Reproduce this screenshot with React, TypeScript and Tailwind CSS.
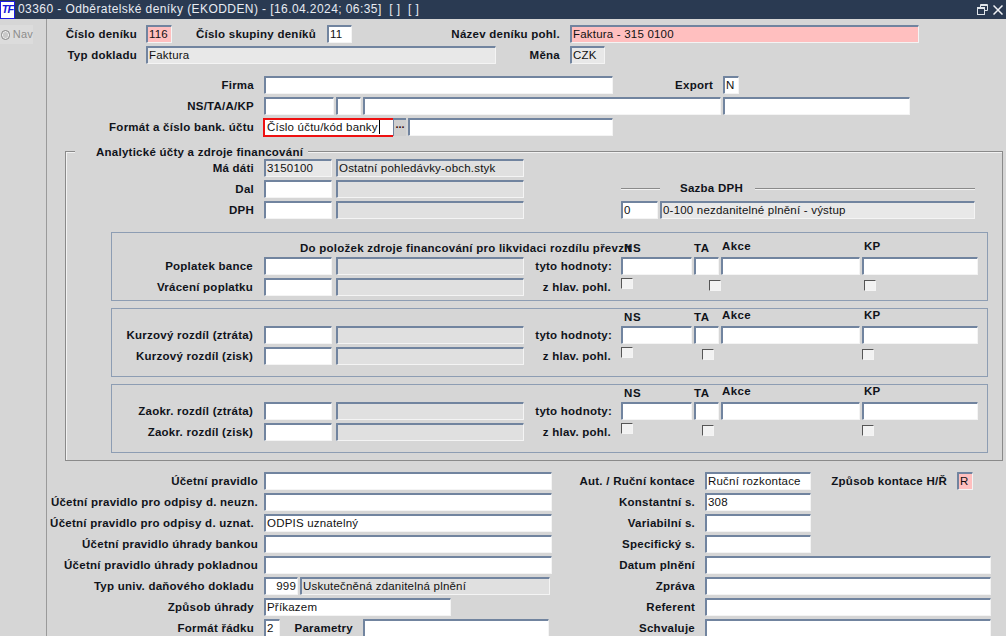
import React from 'react';

function cn(...inputs: any[]) {
  return inputs.filter(Boolean).join(' ');
}

// oracle forms style sunken text item
function Field({ className, value, right }: { className?: string; value?: string; right?: boolean }) {
  return (
    <div
      className={cn(
        'h-[18px] shrink-0 rounded-[1px] border-t-2 border-l-2 border-r border-b border-t-[#71849f] border-l-[#71849f] border-r-[#f4f4f4] border-b-[#f4f4f4] px-[1px] text-[11.5px] leading-[15px] tracking-[0.2px] text-[#111] whitespace-nowrap overflow-hidden',
        right && 'text-right',
        className || 'bg-white',
      )}
    >
      {value}
    </div>
  );
}

function Label({ className, children }: { className?: string; children: React.ReactNode }) {
  return (
    <div className={cn('shrink-0 text-right text-[11.5px] leading-[18px] font-bold tracking-[0.25px] text-[#10131a] whitespace-nowrap', className)}>
      {children}
    </div>
  );
}

function Row({ className, children }: { className?: string; children: React.ReactNode }) {
  return <div className={cn('flex h-[18px] mb-[3px]', className)}>{children}</div>;
}

function Check({ className }: { className?: string }) {
  return <div className={cn('h-[11px] w-[12px] shrink-0 border-t border-l border-t-[#555] border-l-[#555] border-r border-b border-r-[#f4f4f4] border-b-[#f4f4f4] bg-[#f2f2f2]', className)} />;
}

function DiffBox({
  first,
  second,
  title,
  pad,
  check2,
  check3,
  className,
}: {
  first: string;
  second: string;
  title?: string;
  pad?: string;
  check2: string;
  check3: string;
  className?: string;
}) {
  return (
    <div className={cn('ml-[45px] h-[69px] w-[877px] border border-[#8d9db3]', pad, className)}>
      <div className="flex h-[17px]">
        {title ? (
          <div className="ml-[188px] w-[321px] shrink-0 self-end mb-[2px] text-[11.5px] leading-[14px] font-bold tracking-[0.25px] text-[#10131a] whitespace-nowrap">{title}</div>
        ) : (
          <div className="w-[509px] shrink-0" />
        )}
        <div className="w-[73px] shrink-0 self-end mb-[2px] pl-[3px] text-[11.5px] leading-[14px] font-bold tracking-[0.6px] text-[#10131a]">NS</div>
        <div className="w-[27px] shrink-0 self-end mb-[2px] text-[11.5px] leading-[14px] font-bold tracking-[0.6px] text-[#10131a]">TA</div>
        <div className="w-[141px] shrink-0 self-start pl-[1px] text-[11.5px] leading-[12px] font-bold tracking-[0.4px] text-[#10131a]">Akce</div>
        <div className="self-start pl-[2px] text-[11.5px] leading-[12px] font-bold tracking-[0.2px] text-[#10131a]">KP</div>
      </div>
      <Row>
        <Label className="w-[141px] mr-[11px]">{first}</Label>
        <Field className="w-[68px] bg-white" />
        <Field className="ml-[4px] w-[188px] bg-[#e0e0e0]" />
        <Label className="w-[88px] mr-[9px]">tyto hodnoty:</Label>
        <Field className="w-[71px] bg-white" />
        <Field className="ml-[2px] w-[25px] bg-white" />
        <Field className="ml-[2px] w-[139px] bg-white" />
        <Field className="ml-[2px] w-[116px] bg-white" />
      </Row>
      <Row className="mb-0">
        <Label className="w-[141px] mr-[11px]">{second}</Label>
        <Field className="w-[68px] bg-white" />
        <Field className="ml-[4px] w-[188px] bg-[#e0e0e0]" />
        <Label className="w-[87px] mr-[10px]">z hlav. pohl.</Label>
        <Check />
        <Check className={cn('mt-[2px]', check2)} />
        <Check className={cn('mt-[2px]', check3)} />
      </Row>
    </div>
  );
}

export default function App() {
  return (
    <div className="h-[636px] w-[1006px] overflow-hidden bg-[#d6d6d6] font-['Liberation_Sans',Arial,sans-serif]">
      {/* title bar */}
      <div className="flex h-[19px] items-center bg-[#2a3a52]">
        <div className="flex h-[18px] w-[15px] shrink-0 items-center justify-center border border-[#1c1ce0] bg-white text-[11px] leading-none font-bold italic tracking-[-1px] text-[#1616d8]">
          TF
        </div>
        <div className="ml-[3px] text-[12px] leading-[19px] tracking-[0.42px] whitespace-pre text-[#e8ecf2]">
          03360 - Odběratelské deníky (EKODDEN) - [16.04.2024; 06:35]  [ ]  [ ]
        </div>
        <svg className="ml-auto" width="11" height="11" viewBox="0 0 11 11" fill="none" stroke="#dfe4ea" strokeWidth="1">
          <path d="M3.5 3V.5h7v6H7.5" />
          <path d="M3.5 1.5h7" />
          <rect x=".5" y="3.5" width="7" height="7" />
          <path d="M.5 4.5h7" />
        </svg>
        <svg className="ml-[5px] mr-[3px]" width="10" height="10" viewBox="0 0 10 10" fill="none" stroke="#f0f2f5" strokeWidth="1.5">
          <path d="M.5.5l9 9M9.5.5l-9 9" />
        </svg>
      </div>

      <div className="flex h-[617px]">
        {/* nav strip */}
        <div className="w-[47px] shrink-0 border-r border-r-[#9a9a9a]">
          <div className="mt-[6px] flex h-[19px] w-[33px] items-center bg-[#dcdcdc] pl-[1px]">
            <div className="h-[10px] w-[10px] rounded-full border border-[#8a8a8a] bg-[#c9c9c9] shadow-[inset_0_0_0_1px_#efefef]" />
            <span className="ml-[3px] text-[11px] tracking-[0.2px] text-[#8d8d8d]">Nav</span>
          </div>
        </div>

        <div className="min-w-0 flex-1 pt-[6px]">
          {/* header */}
          <Row>
            <Label className="w-[90px] mr-[9px]">Číslo deníku</Label>
            <Field className="w-[26px] bg-[#ffbfbf]" value="116" />
            <Label className="w-[144px] mr-[11px]">Číslo skupiny deníků</Label>
            <Field className="w-[25px] bg-white" value="11" />
            <Label className="w-[208px] mr-[10px]">Název deníku pohl.</Label>
            <Field className="w-[349px] bg-[#ffbfbf]" value="Faktura - 315 0100" />
          </Row>
          <Row className="mb-[12px]">
            <Label className="w-[90px] mr-[9px]">Typ dokladu</Label>
            <Field className="w-[350px] bg-[#e8e8e8]" value="Faktura" />
            <Label className="w-[64px] mr-[10px]">Měna</Label>
            <Field className="w-[35px] bg-[#e8e8e8]" value="CZK" />
          </Row>
          <Row>
            <Label className="w-[207px] mr-[10px]">Firma</Label>
            <Field className="w-[349px] bg-white" />
            <Label className="w-[100px] mr-[10px]">Export</Label>
            <Field className="w-[16px] bg-white" value="N" />
          </Row>
          <Row>
            <Label className="w-[207px] mr-[10px]">NS/TA/A/KP</Label>
            <Field className="w-[70px] bg-white" />
            <Field className="ml-[2px] w-[25px] bg-white" />
            <Field className="ml-[2px] w-[358px] bg-white" />
            <Field className="ml-[2px] w-[187px] bg-white" />
          </Row>
          <Row className="mb-[14px] h-[19px]">
            <Label className="w-[207px] mr-[9px]">Formát a číslo bank. účtu</Label>
            <div className="h-[19px] w-[130px] shrink-0 border-2 border-r-0 border-[#ee1111] bg-white px-[2px] text-[11.5px] leading-[15px] tracking-[0.2px] text-[#111] whitespace-nowrap">
              Číslo účtu/kód banky<span className="ml-[1px] inline-block h-[14px] w-[1px] bg-black align-[-3px]" />
            </div>
            <div className="flex h-[18px] w-[13px] shrink-0 justify-center border-t-2 border-l border-t-[#71849f] border-l-[#71849f] bg-[#cfcfcf] text-[11px] leading-[9px] font-bold text-[#3a0a0a]">
              ...
            </div>
            <Field className="ml-[2px] w-[205px] bg-white" />
          </Row>

          {/* Analytické účty */}
          <div className="relative ml-[18px] h-[310px] w-[938px] border border-[#8a8a8a] pt-[7px] shadow-[inset_1px_1px_0_#f2f2f2]">
            <div className="absolute -top-[7px] left-[9px] w-[233px] bg-[#d6d6d6] pl-[21px] text-[11.5px] leading-[14px] font-bold tracking-[0.25px] text-[#10131a] whitespace-nowrap">
              Analytické účty a zdroje financování
            </div>
            <Row>
              <Label className="w-[188px] mr-[10px]">Má dáti</Label>
              <Field className="w-[68px] bg-[#e8e8e8]" value="3150100" />
              <Field className="ml-[4px] w-[188px] bg-[#e0e0e0]" value="Ostatní pohledávky-obch.styk" />
            </Row>
            <Row>
              <Label className="w-[188px] mr-[10px]">Dal</Label>
              <Field className="w-[68px] bg-white" />
              <Field className="ml-[4px] w-[188px] bg-[#e0e0e0]" />
              <div className="ml-[97px] flex w-[354px] items-center">
                <div className="h-[2px] w-[39px] border-t border-t-[#8a8a8a] bg-[#f2f2f2]" />
                <span className="ml-[20px] text-[11.5px] font-bold tracking-[0.25px] text-[#10131a]">Sazba DPH</span>
                <div className="ml-[12px] h-[2px] flex-1 border-t border-t-[#8a8a8a] bg-[#f2f2f2]" />
              </div>
            </Row>
            <Row className="mb-[13px]">
              <Label className="w-[188px] mr-[10px]">DPH</Label>
              <Field className="w-[68px] bg-white" />
              <Field className="ml-[4px] w-[188px] bg-[#e0e0e0]" />
              <Field className="ml-[97px] w-[37px] bg-white" value="0" />
              <Field className="ml-[2px] w-[315px] bg-[#e8e8e8]" value="0-100 nezdanitelné plnění - výstup" />
            </Row>

            <DiffBox
              first="Poplatek bance"
              second="Vrácení poplatku"
              title="Do položek zdroje financování pro likvidaci rozdílu převzít"
              pad="pt-[7px]"
              check2="ml-[76px]"
              check3="ml-[143px]"
            />
            <DiffBox
              first="Kurzový rozdíl (ztráta)"
              second="Kurzový rozdíl (zisk)"
              check2="ml-[69px]"
              check3="ml-[148px]"
              className="mt-[7px]"
            />
            <DiffBox
              first="Zaokr. rozdíl (ztráta)"
              second="Zaokr. rozdíl (zisk)"
              check2="ml-[69px]"
              check3="ml-[148px]"
              className="mt-[7px]"
            />
          </div>

          {/* bottom columns */}
          <div className="mt-[11px] flex">
            <div className="w-[505px] shrink-0">
              <Row>
                <Label className="w-[211px] mr-[6px]">Účetní pravidlo</Label>
                <Field className="w-[288px] bg-white" />
              </Row>
              <Row>
                <Label className="w-[211px] mr-[6px]">Účetní pravidlo pro odpisy d. neuzn.</Label>
                <Field className="w-[288px] bg-white" />
              </Row>
              <Row>
                <Label className="w-[207px] mr-[10px]">Účetní pravidlo pro odpisy d. uznat.</Label>
                <Field className="w-[288px] bg-white" value="ODPIS uznatelný" />
              </Row>
              <Row>
                <Label className="w-[211px] mr-[6px]">Účetní pravidlo úhrady bankou</Label>
                <Field className="w-[288px] bg-white" />
              </Row>
              <Row>
                <Label className="w-[211px] mr-[6px]">Účetní pravidlo úhrady pokladnou</Label>
                <Field className="w-[288px] bg-white" />
              </Row>
              <Row>
                <Label className="w-[207px] mr-[10px]">Typ univ. daňového dokladu</Label>
                <Field className="w-[34px] bg-white" value="999" right />
                <Field className="ml-[2px] w-[250px] bg-[#e0e0e0]" value="Uskutečněná zdanitelná plnění" />
              </Row>
              <Row>
                <Label className="w-[207px] mr-[10px]">Způsob úhrady</Label>
                <Field className="w-[187px] bg-white" value="Příkazem" />
              </Row>
              <Row>
                <Label className="w-[207px] mr-[10px]">Formát řádku</Label>
                <Field className="w-[16px] bg-white" value="2" />
                <Label className="w-[73px] mr-[10px]">Parametry</Label>
                <Field className="w-[186px] bg-white" />
              </Row>
            </div>
            <div className="min-w-0 flex-1">
              <Row>
                <Label className="w-[143px] mr-[10px]">Aut. / Ruční kontace</Label>
                <Field className="w-[106px] bg-white" value="Ruční rozkontace" />
                <Label className="w-[136px] mr-[10px]">Způsob kontace H/Ř</Label>
                <Field className="w-[16px] bg-[#ffbfbf]" value="R" />
              </Row>
              <Row>
                <Label className="w-[143px] mr-[10px]">Konstantní s.</Label>
                <Field className="w-[106px] bg-white" value="308" />
              </Row>
              <Row>
                <Label className="w-[143px] mr-[10px]">Variabilní s.</Label>
                <Field className="w-[106px] bg-white" />
              </Row>
              <Row>
                <Label className="w-[143px] mr-[10px]">Specifický s.</Label>
                <Field className="w-[106px] bg-white" />
              </Row>
              <Row>
                <Label className="w-[143px] mr-[10px]">Datum plnění</Label>
                <Field className="w-[286px] bg-white" />
              </Row>
              <Row>
                <Label className="w-[143px] mr-[10px]">Zpráva</Label>
                <Field className="w-[286px] bg-white" />
              </Row>
              <Row>
                <Label className="w-[143px] mr-[10px]">Referent</Label>
                <Field className="w-[286px] bg-white" />
              </Row>
              <Row>
                <Label className="w-[143px] mr-[10px]">Schvaluje</Label>
                <Field className="w-[286px] bg-white" />
              </Row>
            </div>
          </div>
        </div>
      </div>
    </div>
  );
}
